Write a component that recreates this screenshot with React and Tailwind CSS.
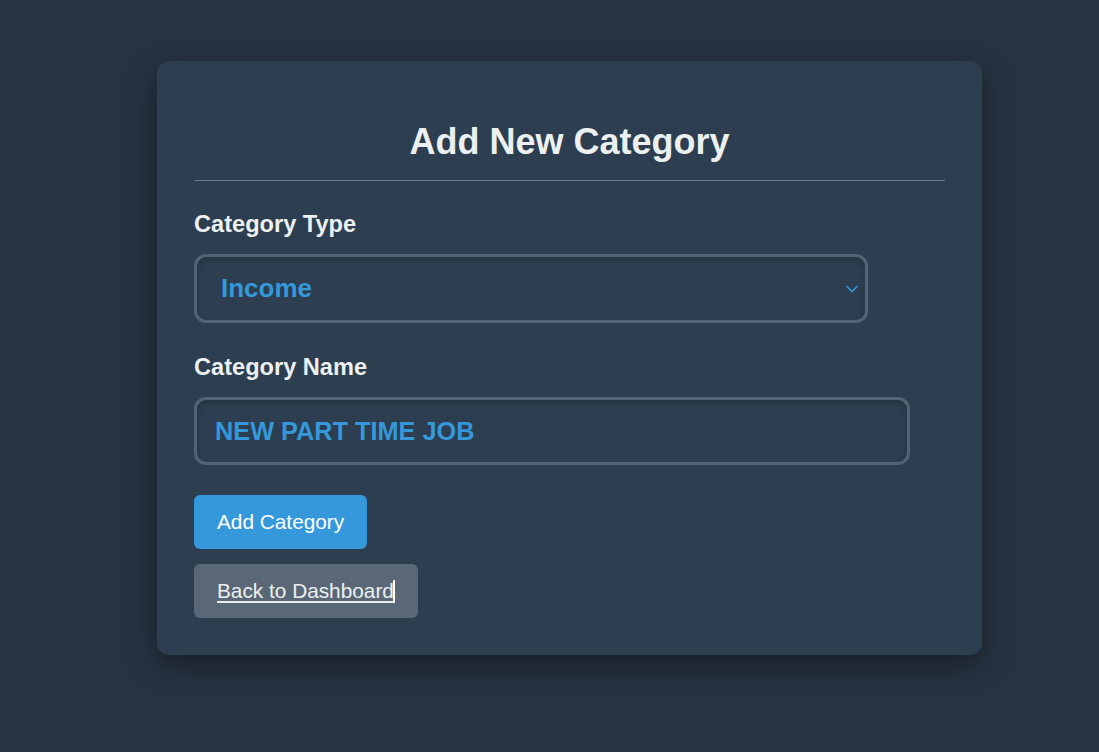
import React, { useState } from 'react';
import { ChevronDown } from 'lucide-react';

const AddCategory = () => {
  const [type, setType] = useState('Income');
  const [name, setName] = useState('NEW PART TIME JOB');

  return (
    <div className="min-h-screen bg-[#263341] pt-[61px] font-['Liberation_Sans',Arial,sans-serif]">
      <div className="ml-[157px] w-[825px] bg-[#2c3e50] rounded-xl px-[37px] pb-[37px] pt-[37px] shadow-[0_10px_30px_rgba(0,0,0,0.4)]">
        {/* HEADER */}
        <h2 className="mt-[22px] pb-[17px] border-b border-[#6b7785] text-center text-[36px] leading-[43px] font-bold text-[#ecf0f1]">
          Add New Category
        </h2>

        {/* TYPE */}
        <label className="block mt-[29px] text-[23.6px] leading-[28px] font-bold text-[#ecf0f1]">Category Type</label>
        <div className="relative mt-[16px] w-[674px]">
          <select
            value={type}
            onChange={(e) => setType(e.target.value)}
            className="appearance-none w-full h-[69px] bg-[#2c3e50] border-[3px] border-[#526375] rounded-xl pl-[24px] text-[26px] font-bold text-[#3498db] outline-none shadow-[inset_0_3px_6px_rgba(0,0,0,0.2)]"
          >
            <option>Income</option>
            <option>Expense</option>
          </select>
          <ChevronDown size={20} strokeWidth={2} className="absolute right-[6px] top-[25px] text-[#3498db] pointer-events-none" />
        </div>

        {/* NAME */}
        <label className="block mt-[30px] text-[23.6px] leading-[28px] font-bold text-[#ecf0f1]">Category Name</label>
        <input
          value={name}
          onChange={(e) => setName(e.target.value)}
          className="block mt-[16px] w-[716px] h-[68px] bg-[#2c3e50] border-[3px] border-[#526375] rounded-xl pl-[18px] text-[25.3px] font-bold text-[#3498db] outline-none shadow-[inset_0_3px_6px_rgba(0,0,0,0.2)]"
        />

        {/* ACTIONS */}
        <button className="block mt-[30px] h-[54px] px-[23px] bg-[#3498db] rounded-md text-[20.8px] text-white">
          Add Category
        </button>
        <a href="#" className="flex items-center w-fit mt-[15px] h-[54px] px-[23px] bg-[#5a6776] rounded-md text-[20.8px] text-[#ecf0f1] underline underline-offset-[3px]">
          Back to Dashboard<span className="inline-block w-[2px] h-[23px] bg-white -ml-[1px]" />
        </a>
      </div>
    </div>
  );
};

export default AddCategory;
